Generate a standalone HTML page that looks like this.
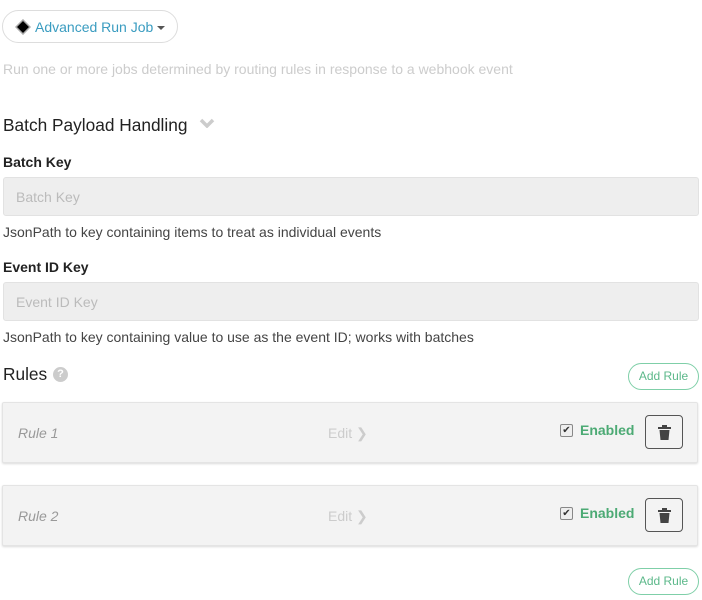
<!DOCTYPE html>
<html><head><style>
body{margin:0;width:702px;height:600px;background:#fff;font-family:"Liberation Sans",sans-serif;position:relative;overflow:hidden}
.a{position:absolute}
.pill{left:2px;top:10px;width:176px;height:33px;border:1px solid #ddd;border-radius:17px;box-sizing:border-box}
.inp{left:3px;width:696px;height:39px;background:#eee;border:1px solid #e2e2e2;border-radius:3px;box-sizing:border-box;color:#bbb;font-size:14px;padding:11px 12px}
.lbl{left:3px;font-weight:bold;font-size:14px;color:#222}
.help{left:3px;font-size:14px;color:#444}
.add{left:628px;width:71px;height:27px;border:1px solid #7fcfa8;border-radius:14px;box-sizing:border-box;color:#5cb88a;font-size:12px;text-align:center;line-height:25px}
.card{left:2px;width:696px;height:61px;background:#f3f3f3;border:1px solid #e4e4e4;border-radius:2px;box-sizing:border-box;box-shadow:0 1px 2px rgba(0,0,0,.15)}
.rn{position:absolute;left:15px;top:22px;font-style:italic;color:#999;font-size:14px}
.ed{position:absolute;left:325px;top:22px;color:#ccc;font-size:14px}
.cb{position:absolute;left:557px;top:21px;width:11px;height:11px;border:1px solid #888;border-radius:2px;background:#eee;font-size:10px;line-height:11px;text-align:center;color:#333}
.en{position:absolute;left:577px;top:19px;color:#4caa74;font-weight:bold;font-size:14px}
.tr{position:absolute;left:642px;top:12px;width:38px;height:34px;border:1px solid #555;border-radius:4px;box-sizing:border-box}
</style></head><body>
<div class="a pill"></div>
<svg class="a" style="left:15px;top:19px" width="16" height="16" viewBox="0 0 16 16"><path d="M8 1L15 8L8 15L1 8Z" fill="#000" stroke="#aaa" stroke-width="1.5"/></svg>
<div class="a" style="left:35px;top:19px;font-size:14px;color:#3a9cc0">Advanced Run Job</div>
<svg class="a" style="left:157px;top:26px" width="8" height="5"><path d="M0 0H8L4 4Z" fill="#555"/></svg>
<div class="a" style="left:3px;top:61px;font-size:14px;color:#ccc">Run one or more jobs determined by routing rules in response to a webhook event</div>
<div class="a" style="left:3px;top:115px;font-size:17.3px;color:#222">Batch Payload Handling</div>
<svg class="a" style="left:199px;top:118px" width="16" height="10"><path d="M2 2L8 8L14 2" fill="none" stroke="#ccc" stroke-width="3.5"/></svg>
<div class="a lbl" style="top:154px">Batch Key</div>
<div class="a inp" style="top:177px">Batch Key</div>
<div class="a help" style="top:224px">JsonPath to key containing items to treat as individual events</div>
<div class="a lbl" style="top:259px">Event ID Key</div>
<div class="a inp" style="top:282px">Event ID Key</div>
<div class="a help" style="top:329px">JsonPath to key containing value to use as the event ID; works with batches</div>
<div class="a" style="left:3px;top:364px;font-size:17.3px;color:#222">Rules</div>
<div class="a" style="left:53px;top:367px;width:15px;height:15px;border-radius:50%;background:#ccc;color:#fff;font-size:11px;font-weight:bold;text-align:center;line-height:15px">?</div>
<div class="a add" style="top:363px">Add Rule</div>
<div class="a card" style="top:402px"><span class="rn">Rule 1</span><span class="ed">Edit ❯</span><span class="cb">✔</span><span class="en">Enabled</span><span class="tr"><svg style="position:absolute;left:12px;top:9px" width="13" height="15" viewBox="0 0 13 15"><path d="M0 2H13V4H0Z M4 0H9V2H4Z M1.5 5H11.5L10.5 15H2.5Z" fill="#444"/></svg></span></div>
<div class="a card" style="top:485px"><span class="rn">Rule 2</span><span class="ed">Edit ❯</span><span class="cb">✔</span><span class="en">Enabled</span><span class="tr"><svg style="position:absolute;left:12px;top:9px" width="13" height="15" viewBox="0 0 13 15"><path d="M0 2H13V4H0Z M4 0H9V2H4Z M1.5 5H11.5L10.5 15H2.5Z" fill="#444"/></svg></span></div>
<div class="a add" style="top:568px">Add Rule</div>
</body></html>
